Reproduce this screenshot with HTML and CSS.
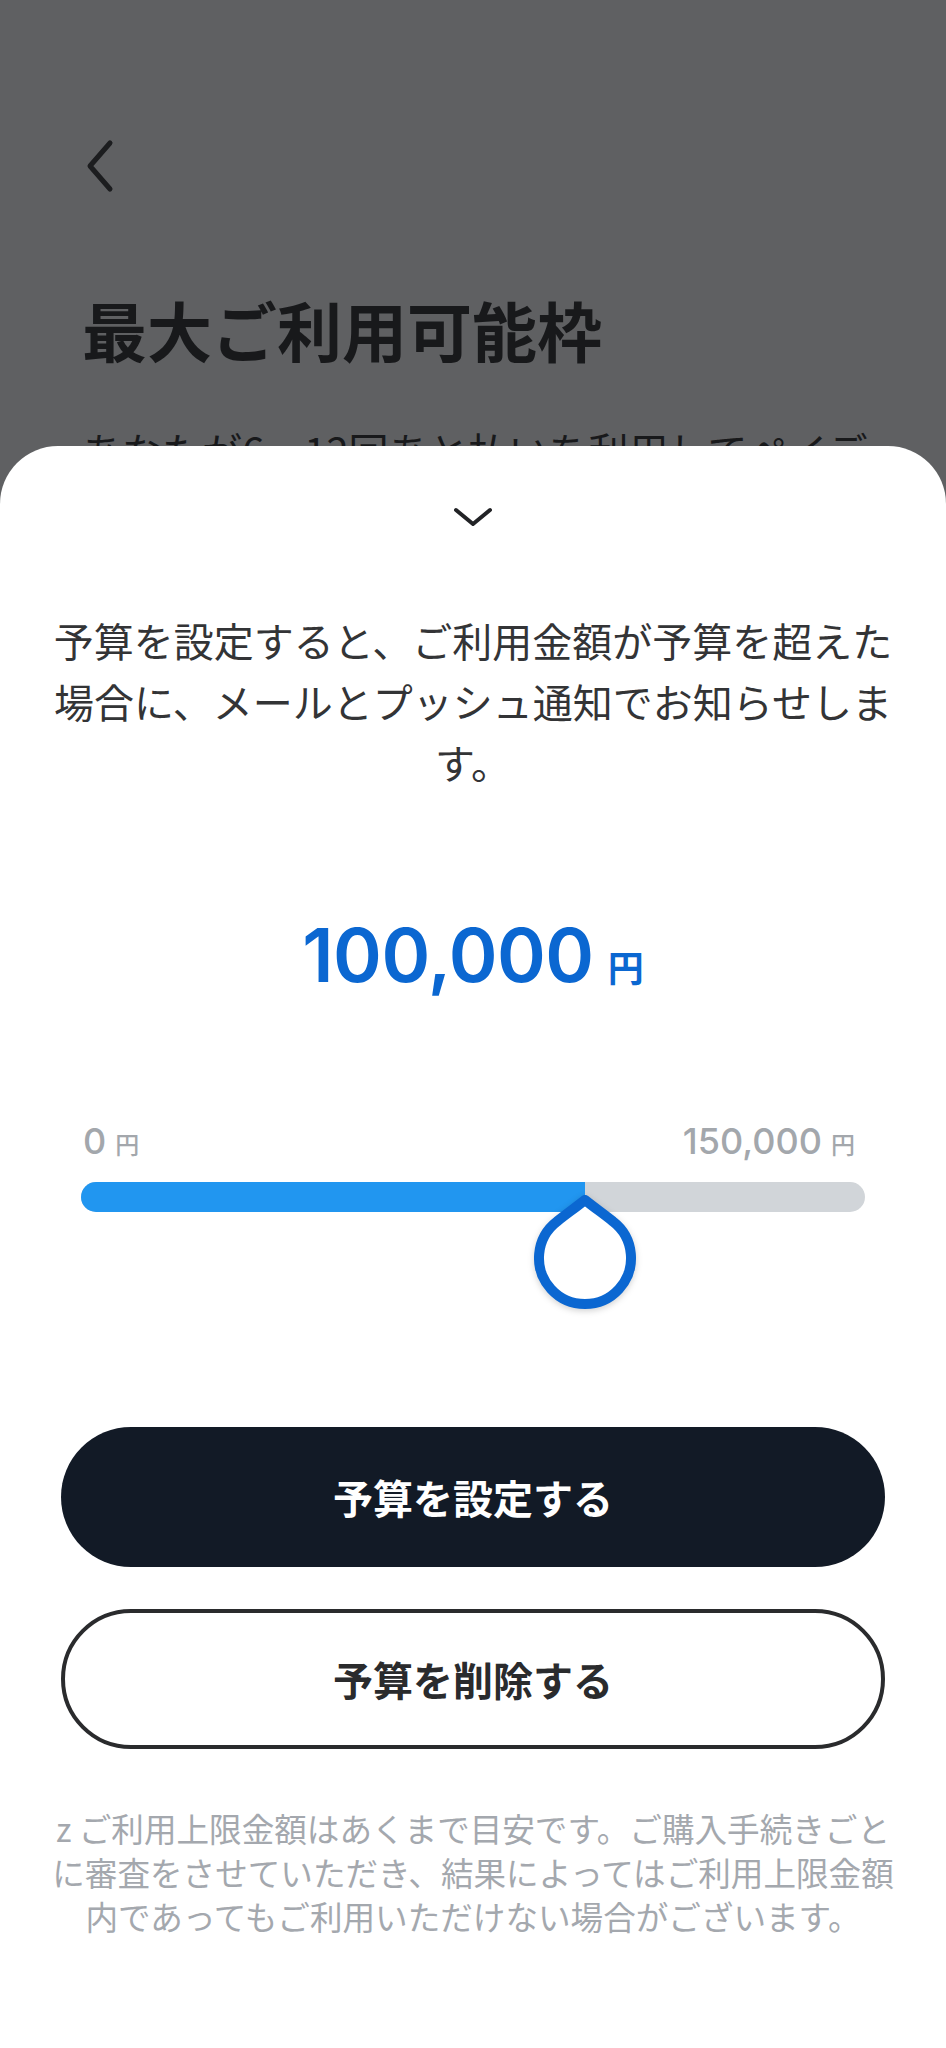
FILE: index.html
```html
<!DOCTYPE html>
<html lang="ja">
<head>
<meta charset="utf-8">
<title>予算を設定</title>
<link rel="stylesheet" href="styles.css">
</head>
<body>
<div class="page">
  <svg class="back" viewBox="0 0 30 56" width="30" height="56" aria-label="戻る">
    <path d="M25 5 L5 28 L25 51" fill="none" stroke="#1c1d1f" stroke-width="5" stroke-linecap="round" stroke-linejoin="round"/>
  </svg>
  <h1 class="title">最大ご利用可能枠</h1>
  <p class="lead">あなたが6・12回あと払いを利用してペイディでお支払いいただける最大金額です。</p>
</div>

<div class="sheet">
  <svg class="close" viewBox="0 0 40 20" width="40" height="20" aria-label="閉じる">
    <path d="M3 3 L20 17 L37 3" fill="none" stroke="#222326" stroke-width="4" stroke-linecap="round" stroke-linejoin="round"/>
  </svg>
  <p class="desc">予算を設定すると、ご利用金額が予算を超えた場合に、メールとプッシュ通知でお知らせします。</p>

  <div class="amount"><span class="amount-num">100,000</span><span class="amount-yen">円</span></div>

  <div class="range-labels">
    <span class="range-label"><span class="range-num">0</span><span class="range-yen">円</span></span>
    <span class="range-label"><span class="range-num">150,000</span><span class="range-yen">円</span></span>
  </div>
  <div class="track">
    <div class="fill" style="width: 64.3%"></div>
    <svg class="thumb" style="left: 64.3%" viewBox="-52 -64 104 117" width="104" height="117">
      <path d="M0 -58 C10 -50 20 -43 28 -36.5 A46 46 0 1 1 -28 -36.5 C-20 -43 -10 -50 0 -58 Z" fill="#ffffff" stroke="#0b67d1" stroke-width="10" stroke-linejoin="round"/>
    </svg>
  </div>

  <button class="btn btn-primary">予算を設定する</button>
  <button class="btn btn-outline">予算を削除する</button>

  <p class="note">z ご利用上限金額はあくまで目安です。ご購入手続きごと<br>に審査をさせていただき、結果によってはご利用上限金額<br>内であってもご利用いただけない場合がございます。</p>
</div>
</body>
</html>
```

FILE: styles.css
```css
* { box-sizing: border-box; }

html, body {
  margin: 0;
  padding: 0;
}

body {
  width: 946px;
  height: 2048px;
  overflow: hidden;
  position: relative;
  background: #5f6062;
  font-family: "Noto Sans CJK JP", "Noto Sans", sans-serif;
}

.page {
  padding: 138px 64px 0 82px;
}

.back {
  display: block;
  margin-left: 3px;
}

.title {
  margin: 96px 0 0;
  font-size: 65px;
  line-height: 78px;
  font-weight: 700;
  color: #18191b;
}

.lead {
  margin: 52px 0 0;
  font-size: 40px;
  line-height: 60px;
  color: #18191b;
}

.sheet {
  position: absolute;
  top: 446px;
  left: 0;
  right: 0;
  bottom: 0;
  background: #ffffff;
  border-radius: 58px 58px 0 0;
  display: flex;
  flex-direction: column;
  align-items: stretch;
}

.close {
  display: block;
  align-self: center;
  margin-top: 61px;
}

.desc {
  margin: 83px 48px 0;
  font-size: 40px;
  line-height: 61px;
  text-align: center;
  color: #333436;
}

.amount {
  margin-top: 125px;
  display: flex;
  justify-content: center;
  align-items: baseline;
  color: #0b67d1;
  line-height: 1;
}

.amount-num {
  font-family: Inter, "Noto Sans", sans-serif;
  font-weight: 600;
  font-size: 74px;
  letter-spacing: -0.5px;
}

.amount-yen {
  font-weight: 700;
  font-size: 36px;
  margin-left: 14px;
}

.range-labels {
  margin: 131px 91px 0 83px;
  display: flex;
  justify-content: space-between;
  line-height: 1;
  color: #a3a7ac;
}

.range-label {
  display: flex;
  align-items: baseline;
}

.range-num {
  font-family: Inter, "Noto Sans", sans-serif;
  font-weight: 500;
  font-size: 36px;
}

.range-yen {
  font-weight: 500;
  font-size: 24px;
  margin-left: 9px;
}

.track {
  position: relative;
  margin: 23px 81px 0;
  height: 30px;
  border-radius: 15px;
  background: #d1d5d9;
}

.fill {
  height: 100%;
  border-radius: 15px 0 0 15px;
  background: #2196f0;
}

.thumb {
  position: absolute;
  top: 12px;
  transform: translateX(-50%);
  filter: drop-shadow(0 2px 3px rgba(0, 0, 0, 0.18));
}

.btn {
  display: block;
  margin: 0 61px;
  height: 140px;
  border-radius: 70px;
  font-family: "Noto Sans CJK JP", "Noto Sans", sans-serif;
  font-size: 40px;
  font-weight: 700;
  cursor: pointer;
}

.btn-primary {
  margin-top: 215px;
  background: #121a26;
  color: #ffffff;
  border: none;
}

.btn-outline {
  margin-top: 42px;
  background: #ffffff;
  color: #2a2b2d;
  border: 4px solid #2a2b2d;
}

.note {
  margin: 57px 40px 0;
  font-size: 32.6px;
  line-height: 44px;
  text-align: center;
  color: #a4a8ae;
}
```
